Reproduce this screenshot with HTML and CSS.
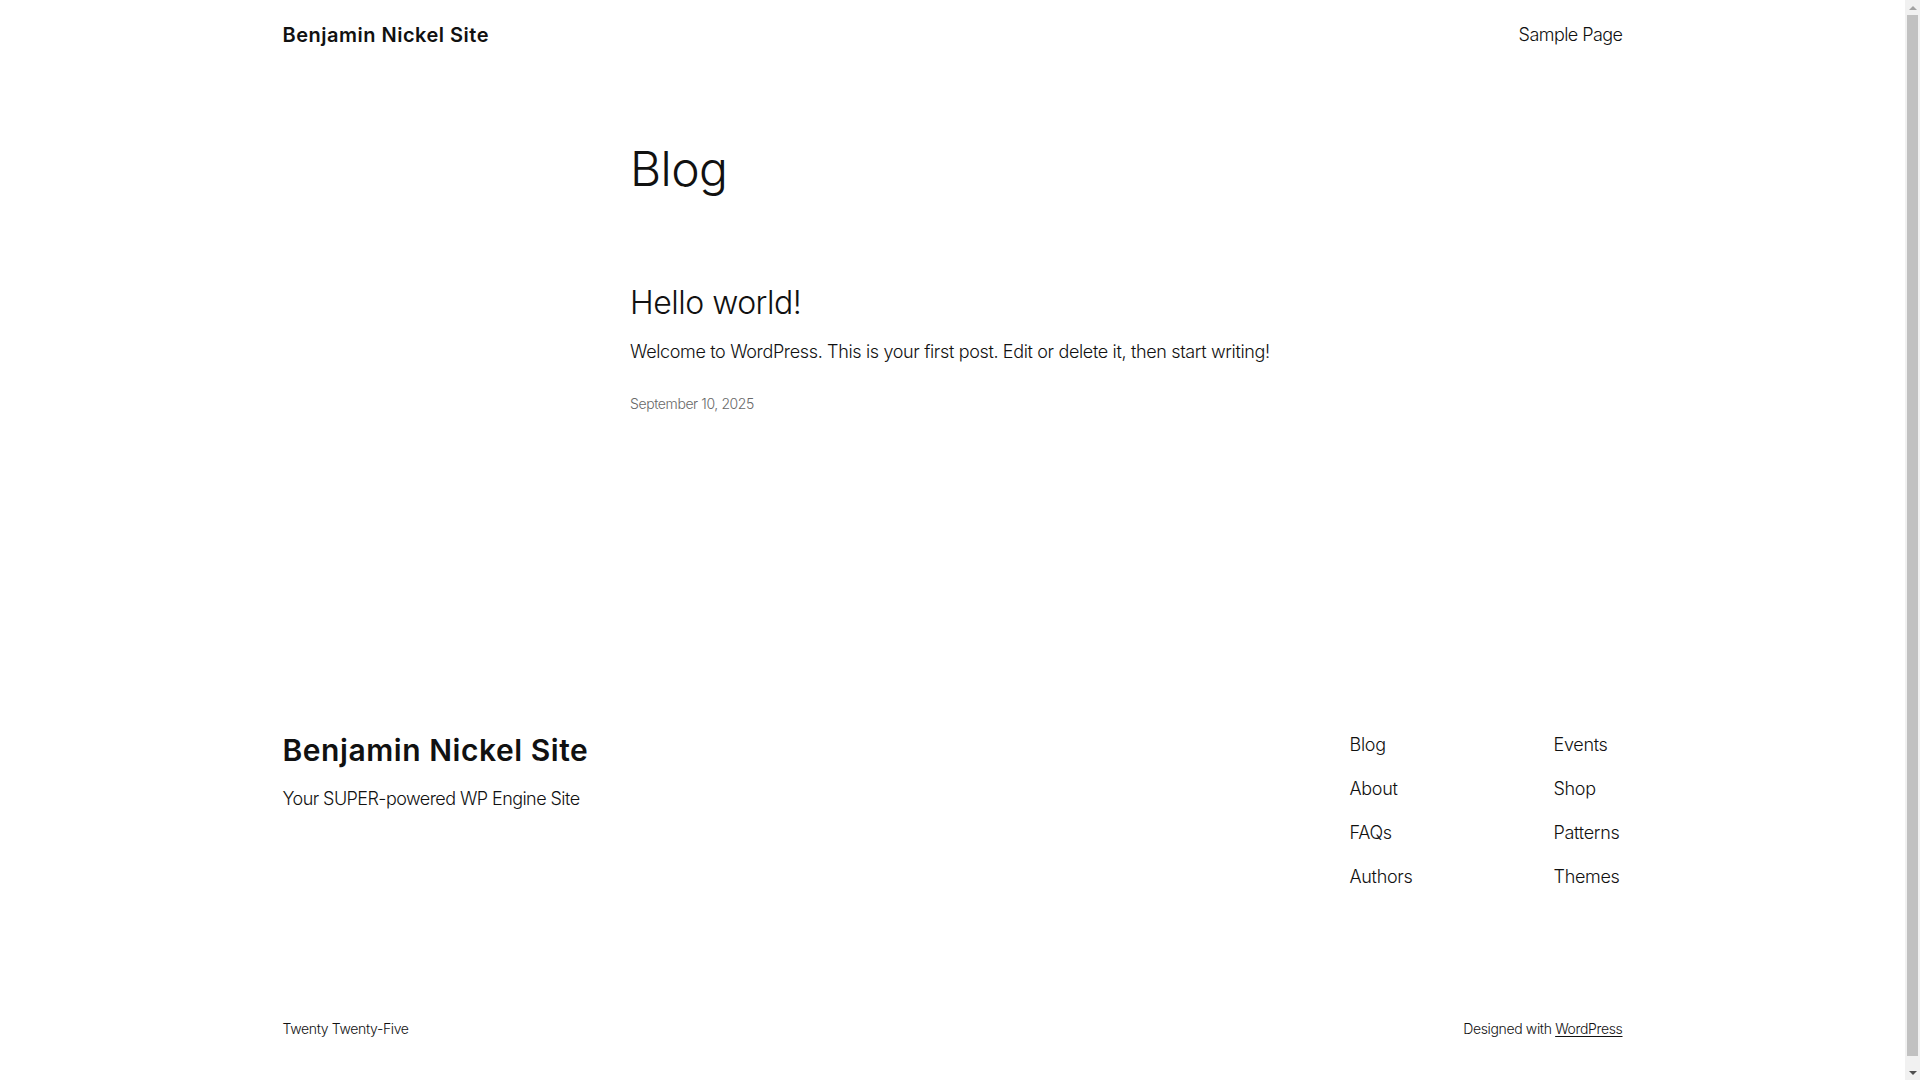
FILE: index.html
```html
<!DOCTYPE html>
<html lang="en">
<head>
<meta charset="utf-8">
<title>Blog – Benjamin Nickel Site</title>
<link rel="stylesheet" href="styles.css">
</head>
<body>
<div class="viewport">
  <div class="page">
    <header class="site-header">
      <a class="site-title" href="#">Benjamin Nickel Site</a>
      <nav class="header-nav"><a href="#">Sample Page</a></nav>
    </header>

    <main class="content">
      <h1 class="page-title">Blog</h1>
      <article class="post">
        <h2 class="post-title"><a href="#">Hello world!</a></h2>
        <p class="post-excerpt">Welcome to WordPress. This is your first post. Edit or delete it, then start writing!</p>
        <div class="post-date">September 10, 2025</div>
      </article>
    </main>

    <footer class="site-footer">
      <div class="footer-top">
        <div class="footer-brand">
          <a class="footer-title" href="#">Benjamin Nickel Site</a>
          <p class="tagline">Your SUPER-powered WP Engine Site</p>
        </div>
        <nav class="footer-nav">
          <ul class="nav-col">
            <li><a href="#">Blog</a></li>
            <li><a href="#">About</a></li>
            <li><a href="#">FAQs</a></li>
            <li><a href="#">Authors</a></li>
          </ul>
          <ul class="nav-col">
            <li><a href="#">Events</a></li>
            <li><a href="#">Shop</a></li>
            <li><a href="#">Patterns</a></li>
            <li><a href="#">Themes</a></li>
          </ul>
        </nav>
      </div>
      <div class="footer-bottom">
        <span>Twenty Twenty-Five</span>
        <span>Designed with <a class="wp-link" href="#">WordPress</a></span>
      </div>
    </footer>
  </div>
</div>
<div class="scrollbar" aria-hidden="true">
  <div class="sb-btn"><span class="sb-arrow-up"></span></div>
  <div class="sb-track"><div class="sb-thumb"></div></div>
  <div class="sb-btn"><span class="sb-arrow-down"></span></div>
</div>
</body>
</html>
```

FILE: styles.css
```css
html, body {
  margin: 0;
  padding: 0;
  background: #ffffff;
}

body {
  display: flex;
  align-items: flex-start;
  font-family: Inter, "Noto Sans", "Liberation Sans", sans-serif;
  color: #111111;
  font-weight: 300;
}

a {
  color: inherit;
  text-decoration: none;
}

.viewport {
  flex: 1;
  min-width: 0;
}

.page {
  width: 1340px;
  margin: 0 auto;
  padding-bottom: 52px;
}

/* Fake browser scrollbar */
.scrollbar {
  position: sticky;
  top: 0;
  flex: 0 0 15px;
  width: 15px;
  height: 100vh;
  background: #f1f1f1;
  display: flex;
  flex-direction: column;
}

.sb-btn {
  height: 15px;
  flex: 0 0 15px;
  display: flex;
  align-items: center;
  justify-content: center;
}

.sb-arrow-up {
  width: 0;
  height: 0;
  border-left: 4px solid transparent;
  border-right: 4px solid transparent;
  border-bottom: 4px solid #a3a3a3;
}

.sb-arrow-down {
  width: 0;
  height: 0;
  border-left: 4px solid transparent;
  border-right: 4px solid transparent;
  border-top: 4px solid #505050;
}

.sb-track {
  flex: 1;
  display: flex;
  padding: 0 2px 9px;
}

.sb-thumb {
  flex: 1;
  background: #c1c1c1;
}

/* Header */
.site-header {
  height: 68px;
  display: flex;
  align-items: center;
  justify-content: space-between;
  padding-top: 1px;
  box-sizing: border-box;
}

.site-title {
  font-size: 20px;
  line-height: 1.2;
  font-weight: 600;
  letter-spacing: 0.5px;
}

.header-nav a {
  font-size: 18px;
  line-height: 1.2;
  font-weight: 300;
  letter-spacing: -0.55px;
}

/* Main */
.content {
  width: 645px;
  margin: 0 auto;
  padding-top: 72px;
  min-height: 591px;
}

.page-title {
  margin: 0;
  font-size: 48px;
  line-height: 1.2;
  font-weight: 300;
  letter-spacing: -0.6px;
}

.post {
  margin-top: 86px;
}

.post-title {
  margin: 0;
  font-size: 32px;
  line-height: 1.2;
  font-weight: 300;
  letter-spacing: -0.5px;
}

.post-excerpt {
  margin: 16px 0 0;
  font-size: 18px;
  line-height: 1.6;
  letter-spacing: -0.35px;
}

.post-date {
  margin-top: 27px;
  font-size: 14px;
  line-height: 1.4;
  color: #686868;
  letter-spacing: -0.4px;
}

/* Footer */
.footer-top {
  display: flex;
  justify-content: space-between;
  align-items: flex-start;
}

.footer-brand {
  padding-top: 1px;
}

.footer-title {
  display: block;
  font-size: 30px;
  line-height: 1.2;
  font-weight: 600;
  letter-spacing: 0.55px;
}

.tagline {
  margin: 17px 0 0;
  font-size: 18px;
  line-height: 1.6;
  letter-spacing: -0.56px;
}

.footer-nav {
  display: grid;
  grid-template-columns: 204px 69px;
}

.nav-col {
  list-style: none;
  margin: 0;
  padding: 0;
  display: flex;
  flex-direction: column;
  gap: 15.2px;
  white-space: nowrap;
}

.nav-col li {
  height: 28.8px;
  line-height: 28.8px;
}

.nav-col a {
  font-size: 18px;
  letter-spacing: -0.3px;
}

.footer-bottom {
  margin-top: 127px;
  display: flex;
  justify-content: space-between;
  font-size: 14px;
  line-height: 1.4;
  letter-spacing: -0.35px;
}

.wp-link {
  text-decoration: underline;
  text-underline-offset: 2px;
  text-decoration-thickness: 1px;
}
```
